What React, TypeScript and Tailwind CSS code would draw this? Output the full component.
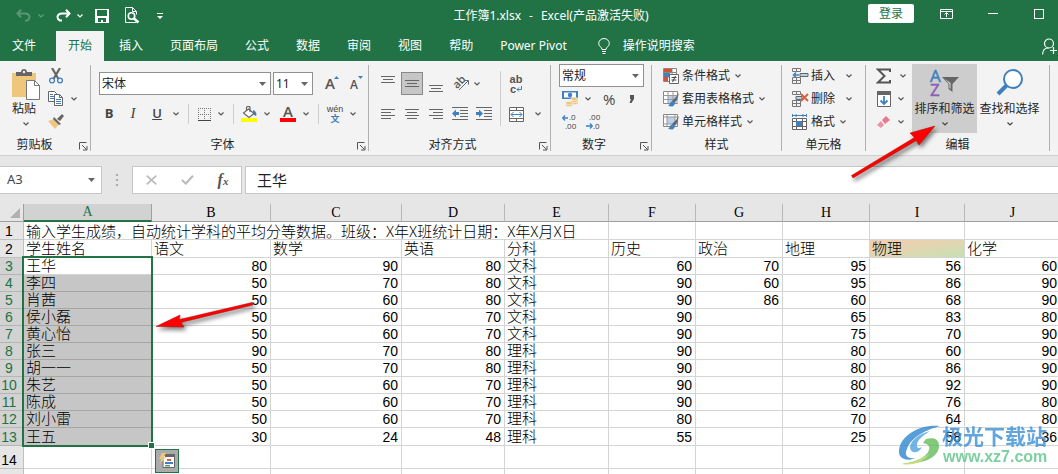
import type { ReactNode } from 'react';
import clsx from 'clsx';

type Row = {
  name: string;
  scores: (string | number)[];
};

const columns = [
  { id: 'A', width: 'w-[128px]' },
  { id: 'B', width: 'w-[119px]' },
  { id: 'C', width: 'w-[131px]' },
  { id: 'D', width: 'w-[103px]' },
  { id: 'E', width: 'w-[104px]' },
  { id: 'F', width: 'w-[87px]' },
  { id: 'G', width: 'w-[87px]' },
  { id: 'H', width: 'w-[87px]' },
  { id: 'I', width: 'w-[95px]' },
  { id: 'J', width: 'w-[96px]' },
];

const subjects = ['学生姓名', '语文', '数学', '英语', '分科', '历史', '政治', '地理', '物理', '化学'];

const rows: Row[] = [
  { name: '王华', scores: [80, 90, 80, '文科', 60, 70, 95, 56, 60] },
  { name: '李四', scores: [50, 70, 80, '文科', 90, 60, 95, 86, 90] },
  { name: '肖茜', scores: [50, 60, 80, '文科', 90, 86, 60, 68, 90] },
  { name: '侯小磊', scores: [50, 60, 70, '文科', 90, '', 65, 83, 80] },
  { name: '黄心怡', scores: [50, 60, 70, '文科', 90, '', 75, 70, 90] },
  { name: '张三', scores: [90, 70, 80, '理科', 90, '', 80, 60, 90] },
  { name: '胡一一', scores: [50, 70, 80, '理科', 90, '', 80, 86, 90] },
  { name: '朱艺', scores: [50, 60, 70, '理科', 90, '', 80, 92, 90] },
  { name: '陈成', scores: [50, 60, 70, '理科', 90, '', 62, 76, 80] },
  { name: '刘小雷', scores: [50, 60, 70, '理科', 80, '', 70, 64, 80] },
  { name: '王五', scores: [30, 24, 48, '理科', 55, '', 25, 58, 36] },
];

const tabs = ['开始', '插入', '页面布局', '公式', '数据', '审阅', '视图', '帮助', 'Power Pivot'];

/* ---------- small shared pieces ---------- */

function Chevron({ className = 'text-[#555]' }: { className?: string }) {
  return (
    <svg className={clsx('shrink-0', className)} width="6" height="4" viewBox="0 0 6 4" fill="none" stroke="currentColor" strokeWidth="1.2">
      <path d="M0.5 0.5 3 3 5.5 0.5" />
    </svg>
  );
}

function Triangle() {
  return (
    <svg className="pointer-events-none shrink-0" width="7" height="4" viewBox="0 0 7 4">
      <path d="M0 0h7L3.5 4z" fill="#666" />
    </svg>
  );
}

function IconButton({ label, className, children }: { label: string; className?: string; children: ReactNode }) {
  return (
    <button type="button" aria-label={label} className={clsx('flex shrink-0 items-center justify-center', className ?? 'h-6 w-6')}>
      {children}
    </button>
  );
}

function Separator() {
  return <div className="mx-[5px] h-5 w-px shrink-0 bg-[#cfcfcf]" />;
}

function Picker({ label, value, className }: { label: string; value: string; className: string }) {
  return (
    <div className={clsx('flex h-[23px] items-center border border-[#919191] bg-white pr-1', className)}>
      <select aria-label={label} className="min-w-0 flex-1 appearance-none bg-transparent pl-0.5 text-xs text-[#222] outline-none">
        <option>{value}</option>
      </select>
      <Triangle />
    </div>
  );
}

type GroupProps = { title: string; width: string; launcher?: boolean; titleClass?: string; children: ReactNode };

function Group({ title, width, launcher, titleClass, children }: GroupProps) {
  return (
    <>
      <section aria-label={title} className={clsx('flex shrink-0 flex-col', width)}>
        <div className="flex-1">{children}</div>
        <div className="flex h-5 items-center">
          <span className={clsx('flex-1 text-center', titleClass)}>{title}</span>
          {launcher && (
            <button type="button" aria-label={`${title}设置`} className="w-[14px] pt-0.5 pl-[3px]">
              <svg width="9" height="9" viewBox="0 0 9 9" fill="none" stroke="#555">
                <path d="M0.5 7.5v-7h7M3 3l4.5 4.5M8 4v4H4" />
              </svg>
            </button>
          )}
        </div>
      </section>
      <div className="my-1 w-px shrink-0 bg-[#b1b1b1]" />
    </>
  );
}

function Lines({ d }: { d: string }) {
  return (
    <svg width="14" height="16" viewBox="0 0 14 16" stroke="#666" shapeRendering="crispEdges">
      <path d={d} />
    </svg>
  );
}

/* ---------- ribbon icons ---------- */

function PasteIcon() {
  return (
    <svg width="28" height="31" viewBox="0 0 28 31">
      <path d="M0 4h24v24H0z" fill="#eec77c" />
      <path d="M4 7V3h5c0-4 6-4 6 0h5v4z" fill="#666" />
      <circle cx="12" cy="3" r="1.2" fill="#f3f3f3" />
      <path d="M14.5 11.5h8l5 5v14h-13z" fill="#fff" stroke="#777" />
      <path d="M22.5 11.5v5h5" fill="none" stroke="#777" />
    </svg>
  );
}

function CutIcon() {
  return (
    <svg width="14" height="16" viewBox="0 0 14 16" fill="none">
      <path d="M3 0 9.5 11M11 0 4.5 11" stroke="#666" strokeWidth="2.2" />
      <circle cx="3" cy="12.5" r="2.4" stroke="#4080bf" strokeWidth="1.3" />
      <circle cx="11" cy="12.5" r="2.4" stroke="#4080bf" strokeWidth="1.3" />
    </svg>
  );
}

function CopyIcon() {
  return (
    <svg width="16" height="15" viewBox="0 0 16 15">
      <path d="M0.5 0.5h6l2 2v8h-8z" fill="#fff" stroke="#666" />
      <path d="M2 3.5h3M2 5.5h4M2 7.5h4" stroke="#4080bf" />
      <path d="M6.5 3.5h5l3 3v8h-8z" fill="#fff" stroke="#666" />
      <path d="M11.5 3.5v3h3" fill="none" stroke="#666" />
      <path d="M8 8.5h5M8 10.5h5M8 12.5h5" stroke="#4080bf" />
    </svg>
  );
}

function BrushIcon() {
  return (
    <svg width="16" height="15" viewBox="0 0 16 15">
      <path d="M0 7 6 5l5 5-4 5z" fill="#eec77c" />
      <path d="m6 3 7 7-2 1-6-6z" fill="#666" />
      <path d="m9 5 5-5 2 2-4 5z" fill="#666" />
    </svg>
  );
}

function FillColorIcon() {
  return (
    <svg width="16" height="16" viewBox="0 0 16 16">
      <path d="M12 4c3 1 4 3 3 6l-2-1-1-3z" fill="#4080bf" />
      <path d="M7.5 3 13 7.5 8 11.5 2.5 7z" fill="#fff" stroke="#666" strokeWidth="1.2" />
      <path d="M5.5 5V1.5C5.5 0 9 0 9 1.5V6" fill="none" stroke="#666" strokeWidth="1.2" />
      <path d="M0 12h16v4H0z" fill="#ff0" />
    </svg>
  );
}

function BordersIcon() {
  return (
    <svg width="13" height="13" viewBox="0 0 13 13" stroke="#777" shapeRendering="crispEdges">
      <path d="M0 .5h13M0 6.5h13M.5 0v13M6.5 0v13M12.5 0v13" strokeDasharray="1 1" />
      <path d="M0 12.5h13" stroke="#444" />
    </svg>
  );
}

function IndentIcon({ out }: { out?: boolean }) {
  return (
    <svg width="16" height="14" viewBox="0 0 16 14">
      <path d="M0 .5h16M8 3.5h8M8 6.5h8M8 9.5h8M0 12.5h16" stroke="#666" shapeRendering="crispEdges" />
      <path d={out ? 'M0 6.5 4 2.5V5h3v3H4v2.5z' : 'M7 6.5 3 2.5V5H0v3h3v2.5z'} fill="#4080bf" />
    </svg>
  );
}

function MergeIcon() {
  return (
    <svg width="15" height="15" viewBox="0 0 15 15" fill="none" stroke="#666">
      <path d="M.5.5h14v14H.5zM.5 3.5h14M.5 11.5h14M7.5 0v3.5M7.5 11.5V15" fill="#fff" />
      <path d="M2 7.5h11M4.5 5 2 7.5 4.5 10M10.5 5 13 7.5 10.5 10" stroke="#4080bf" />
    </svg>
  );
}

function OrientationIcon() {
  return (
    <svg className="overflow-visible" width="17" height="17" viewBox="0 0 17 17">
      <text x="0" y="11" fontSize="11" fontWeight="600" fill="#555" transform="rotate(-45 6 8)" fontFamily="Open Sans, sans-serif">ab</text>
      <path d="M6 15 15 6M11.5 5.5h4v4" fill="none" stroke="#666" />
    </svg>
  );
}

function CurrencyIcon() {
  return (
    <svg width="16" height="16" viewBox="0 0 16 16">
      <path d="M0 0h16v8H0z" fill="#4080bf" />
      <path d="M2 1.5h12v5H2z" fill="#fff" />
      <circle cx="8" cy="4" r="2.2" fill="#4080bf" />
      <g fill="#eec77c" stroke="#f3f3f3" strokeWidth=".6">
        <ellipse cx="12.5" cy="12" rx="3.5" ry="1.7" />
        <ellipse cx="12.5" cy="10" rx="3.5" ry="1.7" />
        <ellipse cx="12.5" cy="8" rx="3.5" ry="1.7" />
        <ellipse cx="7" cy="14" rx="3.5" ry="1.7" />
        <ellipse cx="7" cy="12" rx="3.5" ry="1.7" />
      </g>
    </svg>
  );
}

function DecimalIcon({ grow }: { grow?: boolean }) {
  return (
    <svg className="overflow-visible" width="15" height="14" viewBox="0 0 15 14" fontFamily="Open Sans, sans-serif" fontSize="8" fill="#444">
      <text x={grow ? 7 : 3} y="5">{grow ? '.0' : '.00'}</text>
      <text x={grow ? 3 : 7} y="14">{grow ? '.00' : '.0'}</text>
      <path d={grow ? 'M6 3H1M3 .5.7 3 3 5.5' : 'M0 11h6M4 8.5 6.3 11 4 13.5'} fill="none" stroke="#4080bf" strokeWidth="1.3" />
    </svg>
  );
}

function ConditionalIcon() {
  return (
    <svg width="16" height="16" viewBox="0 0 16 16">
      <path d="M.5.5h13v13H.5zM.5 4.5h13M.5 9h13M4.5.5v13M9 .5v13" fill="#fff" stroke="#888" />
      <path d="M1 1h8v3H1zM1 9h4v4H1z" fill="#d8502e" />
      <path d="M1 5h6v4H1z" fill="#4080bf" />
      <path d="M6.5 6.5h9v9h-9z" fill="#fff" stroke="#666" />
      <path d="M8.5 9.5h5M8.5 12h5M12.5 8l-3 6" stroke="#444" />
    </svg>
  );
}

function TableStyleIcon({ cell }: { cell?: boolean }) {
  return (
    <svg width="16" height="16" viewBox="0 0 16 16">
      <path d="M.5.5h14v12H.5z" fill="#fff" stroke="#888" />
      <path d={cell ? 'M4 3h8v7H4z' : 'M5 4h10v8H5z'} fill="#b9d0e8" />
      <path d={cell ? 'M.5 3h14M.5 10h14M4 .5v12M12 .5v12' : 'M.5 4.5h14M.5 8.5h14M5 .5v12M10 .5v12'} stroke="#999" fill="none" />
      <path d="m16 2-2 7-3 3-2-2 4-4z" fill="#666" />
      <path d="M5 15c2-1 2-5 5-5 3 1 2 5-1 5.5z" fill="#4080bf" />
    </svg>
  );
}

function CellsIcon({ kind }: { kind: 'insert' | 'delete' | 'format' }) {
  if (kind === 'format') {
    return (
      <svg width="16" height="16" viewBox="0 0 16 16" fill="none">
        <path d="M.5 0v3M14.5 0v3M1 1.5h13M4 0v3M11 0v3" stroke="#4080bf" />
        <path d="M.5 4.5h14v11H.5zM.5 7.5h14M.5 12.5h14M4.5 4.5v11M10.5 4.5v11" stroke="#666" fill="#fff" />
        <path d="M4 7h6v5H4z" fill="#4080bf" />
      </svg>
    );
  }
  return (
    <svg width="17" height="16" viewBox="0 0 17 16" fill="none">
      <path d="M.5.5h8v3h-8zM4.5.5v3M.5 9.5h8v6h-8zM4.5 9.5v6M.5 12.5h8" stroke="#777" />
      {kind === 'insert' ? (
        <>
          <path d="M8 5.5h8v3H8z" fill="#b9d0e8" stroke="#666" />
          <path d="M7 7H2M4 4.5 1.5 7 4 9.5" stroke="#4080bf" strokeWidth="1.6" />
        </>
      ) : (
        <>
          <path d="M4 5.5h6v3H4z" fill="#b9d0e8" stroke="#666" />
          <path d="m9 3 7 7M16 3l-7 7" stroke="#e0593a" strokeWidth="1.8" />
        </>
      )}
    </svg>
  );
}

/* ---------- title bar + tabs ---------- */

function TitleBar() {
  return (
    <div className="flex h-[31px] items-center">
      <div className="flex w-[200px] items-center pl-4">
        <IconButton label="撤消" className="h-5 w-[15px] opacity-25">
          <svg width="15" height="13" viewBox="0 0 15 13" fill="none" stroke="#fff" strokeWidth="2">
            <path d="M5 0.7 1.5 4.5 5 8.3M2 4.5h7c5 0 6 5 2 7H9" />
          </svg>
        </IconButton>
        <Chevron className="ml-[7px] text-white opacity-30" />
        <IconButton label="恢复" className="ml-3 h-5 w-[15px]">
          <svg width="15" height="13" viewBox="0 0 15 13" fill="none" stroke="#fff" strokeWidth="2">
            <path d="m10 .7 3.5 3.8L10 8.3M13 4.5H6c-5 0-6 5-2 7h2" />
          </svg>
        </IconButton>
        <Chevron className="ml-[6px] text-white" />
        <IconButton label="保存" className="ml-3 h-5 w-[14px]">
          <svg width="14" height="14" viewBox="0 0 14 14">
            <path d="M0 0h14v14H0z" fill="#fff" />
            <path d="M2 1h10v6H2zM3 9h8v4H8v-2H6v2H3z" fill="#217346" />
          </svg>
        </IconButton>
        <IconButton label="打印预览" className="ml-4 h-5 w-[15px]">
          <svg width="15" height="17" viewBox="0 0 15 17" fill="none" stroke="#fff">
            <path d="M11.5 15.5H.5V.5h7l4 4v3M7.5.5v4h4" />
            <circle cx="6.5" cy="9" r="3.2" strokeWidth="1.6" />
            <path d="m9 11.5 4.5 4" strokeWidth="2.4" />
          </svg>
        </IconButton>
        <IconButton label="自定义快速访问工具栏" className="ml-[17px] h-5 w-[6px]">
          <svg width="6" height="6" viewBox="0 0 6 6">
            <path d="M0 0h6v1H0zM0 3h6L3 6z" fill="#fff" />
          </svg>
        </IconButton>
      </div>
      <h1 className="flex flex-1 justify-center gap-2 pl-[34px] whitespace-nowrap text-white">
        <span>工作簿1.xlsx</span>
        <span>-</span>
        <span>Excel(产品激活失败)</span>
      </h1>
      <div className="flex w-[190px] items-center pr-[14px] pb-1">
        <button type="button" className="h-[19px] w-[46px] rounded-xs bg-white leading-[19px] text-[#217346]">登录</button>
        <IconButton label="功能区显示选项" className="ml-[26px] h-4 w-[13px]">
          <svg width="13" height="10" viewBox="0 0 13 10" fill="none" stroke="#fff">
            <path d="M.5.5h12v9H.5zM.5 2.5h12M6.5 8V4M4.5 5.5l2-2 2 2" />
          </svg>
        </IconButton>
        <IconButton label="最小化" className="ml-[35px] h-4 w-[10px]">
          <span className="h-px w-[10px] bg-white" />
        </IconButton>
        <IconButton label="最大化" className="ml-9 h-4 w-[10px]">
          <span className="h-[10px] w-[10px] border border-white" />
        </IconButton>
      </div>
    </div>
  );
}

function Tabs() {
  return (
    <nav className="flex h-[30px] items-stretch gap-[3px] text-white">
      <button type="button" className="mr-[5px] px-3">文件</button>
      {tabs.map((tab) => (
        <button
          key={tab}
          type="button"
          className={clsx('shrink-0 px-3', tab === '开始' && 'bg-[#f3f3f3] text-[#217346]')}
        >
          {tab}
        </button>
      ))}
      <button type="button" className="flex shrink-0 items-center gap-[13px] pl-4">
        <svg width="12" height="17" viewBox="0 0 12 17" fill="none" stroke="#fff">
          <path d="M4 11.5C4 9 .7 8.5.7 5.5a5.3 5 0 0 1 10.6 0C11.3 8.5 8 9 8 11.5zM4 13.5h4M4.5 15.5h3" />
        </svg>
        操作说明搜索
      </button>
      <button type="button" aria-label="共享" className="ml-auto pr-px">
        <svg width="15" height="17" viewBox="0 0 15 17" fill="none" stroke="#fff" strokeWidth="1.2">
          <circle cx="7" cy="5.5" r="4.5" />
          <path d="M.6 16.5c0-4 2-6.5 6-6.5M8 12.5h7M11.5 9v7" />
        </svg>
      </button>
    </nav>
  );
}

/* ---------- ribbon ---------- */

function MenuRow({ icon, text, wide }: { icon: ReactNode; text: string; wide?: boolean }) {
  return (
    <button type="button" className="flex h-[23px] items-center whitespace-nowrap">
      <span className="w-[19px]">{icon}</span>
      {text}
      <span className={wide ? 'w-[11px]' : 'w-[5px]'} />
      <Chevron />
    </button>
  );
}

function Ribbon() {
  return (
    <div className="flex h-[95px] overflow-hidden border-b border-[#d0d0d0] bg-[#f3f3f3] text-[#262626]">
      <Group title="剪贴板" width="w-[90px]" launcher titleClass="pr-[7px]">
        <div className="flex">
          <button type="button" className="flex w-12 flex-col items-center pt-2">
            <span className="pl-1"><PasteIcon /></span>
            <span className="leading-[18px]">粘贴</span>
            <span className="pt-1 pl-1"><Chevron className="block text-[#555]" /></span>
          </button>
          <div className="flex flex-col pt-[3px]">
            <IconButton label="剪切" className="h-[23px] w-4"><CutIcon /></IconButton>
            <div className="flex items-center gap-[7px]">
              <IconButton label="复制" className="h-[23px] w-4"><CopyIcon /></IconButton>
              <Chevron />
            </div>
            <IconButton label="格式刷" className="h-[23px] w-4"><BrushIcon /></IconButton>
          </div>
        </div>
      </Group>

      <Group title="字体" width="w-[277px]" launcher>
        <div className="flex flex-col gap-[7px] pt-[11px] pl-2">
          <div className="flex h-[23px] items-center">
            <Picker label="字体" value="宋体" className="w-[172px]" />
            <Picker label="字号" value="11" className="ml-[2px] w-[40px]" />
            <IconButton label="增大字号" className="ml-[7px] h-6 w-6">
              <svg className="overflow-visible" width="14" height="16" viewBox="0 0 14 16">
                <text x="0" y="13" fontSize="15" fontWeight="600" fill="#555" fontFamily="Open Sans, sans-serif">A</text>
                <path d="M9 3h5L11.5 0z" fill="#4080bf" />
              </svg>
            </IconButton>
            <IconButton label="减小字号">
              <svg className="overflow-visible" width="13" height="16" viewBox="0 0 13 16">
                <text x="0" y="13" fontSize="12" fontWeight="600" fill="#555" fontFamily="Open Sans, sans-serif">A</text>
                <path d="M8 0h5l-2.500 3z" fill="#4080bf" />
              </svg>
            </IconButton>
          </div>
          <div className="flex h-6 items-center font-['Open_Sans'] text-[13px] text-[#444]">
            <button type="button" className="w-5 font-bold">B</button>
            <button type="button" className="ml-1 w-5 font-['Liberation_Serif'] text-[15px] italic">I</button>
            <button type="button" className="ml-1 w-5 font-semibold underline">U</button>
            <span className="ml-[6px]"><Chevron /></span>
            <span className="ml-[4px]"><Separator /></span>
            <IconButton label="边框" className="ml-[2px] h-6 w-4"><BordersIcon /></IconButton>
            <span className="ml-[6px]"><Chevron /></span>
            <span className="ml-1"><Separator /></span>
            <IconButton label="填充颜色" className="ml-[2px] h-6 w-4"><FillColorIcon /></IconButton>
            <span className="ml-[7px]"><Chevron /></span>
            <IconButton label="字体颜色" className="ml-[10px] h-6 w-4">
              <svg className="overflow-visible" width="16" height="16" viewBox="0 0 16 16">
                <text x="3" y="11" fontSize="15" fontWeight="600" fill="#555" fontFamily="Open Sans, sans-serif">A</text>
                <path d="M0 12h16v4H0z" fill="#f00" />
              </svg>
            </IconButton>
            <span className="ml-[7px]"><Chevron /></span>
            <span className="ml-[4px]"><Separator /></span>
            <button type="button" className="ml-[2px] flex w-[18px] flex-col items-center font-['Liberation_Sans','Noto_Sans_CJK_SC'] text-[9px] leading-[10px]">
              <span>wén</span>
              <span className="font-bold text-[#4080bf]">文</span>
            </button>
            <span className="ml-[6px]"><Chevron /></span>
          </div>
        </div>
      </Group>

      <Group title="对齐方式" width="w-[181px]" launcher>
        <div className="flex pl-[7px]">
          <div className="flex flex-col gap-[7px] pt-[11px]">
            <div className="flex h-[23px] items-center">
              <IconButton label="顶端对齐"><Lines d="M0 .5h14M2 3.5h10M0 6.5h14" /></IconButton>
              <IconButton label="垂直居中" className="mx-px h-[23px] w-[22px] border border-[#888] bg-[#c6c6c6]">
                <Lines d="M0 4.5h14M2 7.5h10M0 10.5h14" />
              </IconButton>
              <IconButton label="底端对齐"><Lines d="M0 9.5h14M2 12.5h10M0 15.5h14" /></IconButton>
              <IconButton label="方向" className="h-6 w-[26px]"><OrientationIcon /></IconButton>
              <Chevron />
            </div>
            <div className="flex h-6 items-center">
              <IconButton label="左对齐"><Lines d="M0 3.5h14M0 6.5h10M0 9.5h14M0 12.5h10" /></IconButton>
              <IconButton label="居中"><Lines d="M0 3.5h14M2 6.5h10M0 9.5h14M2 12.5h10" /></IconButton>
              <IconButton label="右对齐"><Lines d="M0 3.5h14M4 6.5h10M0 9.5h14M4 12.5h10" /></IconButton>
              <IconButton label="减少缩进量"><IndentIcon out /></IconButton>
              <IconButton label="增加缩进量"><IndentIcon /></IconButton>
            </div>
          </div>
          <div className="mt-[10px] ml-1 h-[55px] w-px bg-[#cfcfcf]" />
          <div className="flex flex-col gap-[7px] pt-[11px] pl-[3px]">
            <button type="button" className="flex h-[23px] w-6 flex-col items-center justify-center font-['Liberation_Sans'] text-[11px] leading-[10px] font-bold text-[#555]">
              <span>ab</span>
              <span className="flex items-center">
                c
                <svg width="6" height="6" viewBox="0 0 6 6" fill="none" stroke="#4080bf">
                  <path d="M5.5 0v3.5H1M3 1.5l-2 2 2 2" />
                </svg>
              </span>
            </button>
            <div className="flex items-center gap-[7px]">
              <IconButton label="合并后居中"><MergeIcon /></IconButton>
              <Chevron />
            </div>
          </div>
        </div>
      </Group>

      <Group title="数字" width="w-[100px]" launcher>
        <div className="flex flex-col pt-[3px] pl-2">
          <Picker label="数字格式" value="常规" className="w-[85px]" />
          <div className="flex h-[23px] items-center pl-[3px]">
            <IconButton label="会计数字格式" className="h-5 w-4"><CurrencyIcon /></IconButton>
            <span className="ml-[7px]"><Chevron /></span>
            <button type="button" className="ml-3 font-['Open_Sans'] text-[15px] text-[#444]">%</button>
            <button type="button" aria-label="千位分隔样式" className="ml-[14px]">
              <svg width="6" height="8" viewBox="0 0 6 8">
                <path d="M1 0h4v4L2.5 8H.5L2 4H1z" fill="#555" />
              </svg>
            </button>
          </div>
          <div className="flex h-[23px] items-center gap-[9px] pl-[3px]">
            <IconButton label="增加小数位数" className="h-5 w-[15px]"><DecimalIcon grow /></IconButton>
            <IconButton label="减少小数位数" className="h-5 w-[15px]"><DecimalIcon /></IconButton>
          </div>
        </div>
      </Group>

      <Group title="样式" width="w-[129px]">
        <div className="flex flex-col items-start pt-[3px] pl-[11px]">
          <MenuRow icon={<ConditionalIcon />} text="条件格式" />
          <MenuRow icon={<TableStyleIcon />} text="套用表格格式" />
          <MenuRow icon={<TableStyleIcon cell />} text="单元格样式" />
        </div>
      </Group>

      <Group title="单元格" width="w-[83px]">
        <div className="flex flex-col items-start pt-[3px] pl-[10px]">
          <MenuRow icon={<CellsIcon kind="insert" />} text="插入" wide />
          <MenuRow icon={<CellsIcon kind="delete" />} text="删除" wide />
          <MenuRow icon={<CellsIcon kind="format" />} text="格式" />
        </div>
      </Group>

      <Group title="编辑" width="w-[183px]">
        <div className="flex pt-[3px]">
          <div className="flex w-[46px] flex-col pl-[10px]">
            <button type="button" aria-label="自动求和" className="flex h-[23px] items-center gap-[8px]">
              <svg width="16" height="16" viewBox="0 0 16 16" fill="none" stroke="#555" strokeWidth="2">
                <path d="M14 4V1.5H2L8.5 8 2 14.5h12V12" />
              </svg>
              <Chevron />
            </button>
            <button type="button" aria-label="填充" className="flex h-[23px] items-center gap-[7px] pl-px">
              <svg width="14" height="16" viewBox="0 0 14 16" fill="none">
                <path d="M.5.5h13v15H.5z" fill="#fff" stroke="#666" />
                <path d="M0 0h14v4H0z" fill="#666" />
                <path d="M7 5v8M3.5 9.5 7 13l3.5-3.5" stroke="#4080bf" strokeWidth="1.8" />
              </svg>
              <Chevron />
            </button>
            <button type="button" aria-label="清除" className="flex h-[23px] items-center gap-[7px] pl-px">
              <svg width="14" height="14" viewBox="0 0 14 14">
                <path d="m9 1 4 4-5 4-3-4z" fill="#e8798c" />
                <path d="m4 6 3 4-3 3-4-3z" fill="#ec93a2" />
              </svg>
              <Chevron />
            </button>
          </div>
          <button type="button" className="flex h-[69px] w-[65px] flex-col items-center bg-[#cdcdcd] pt-1">
            <svg className="overflow-visible" width="32" height="32" viewBox="0 0 32 32" fontFamily="Open Sans, sans-serif" fontSize="17">
              <text x="1" y="14" fill="#4080bf" stroke="#4080bf" strokeWidth=".5">A</text>
              <text x="1" y="28" fill="#8a5fb5" stroke="#8a5fb5" strokeWidth=".5">Z</text>
              <path d="M13 9h17l-6.500 7v8L19.500 21v-5z" fill="#666" />
              <path d="m16 11 4.500 5v4l1 1v-6z" fill="#ddd" />
            </svg>
            <span className="leading-[18px]">排序和筛选</span>
            <span className="pt-1"><Chevron className="block text-[#444]" /></span>
          </button>
          <button type="button" className="flex w-[65px] flex-col items-center pt-1">
            <svg width="28" height="32" viewBox="0 0 28 32" fill="none" stroke="#4080bf">
              <circle cx="17" cy="11" r="9" fill="#fff" strokeWidth="2" />
              <path d="m11 17-9 9" strokeWidth="4" />
            </svg>
            <span className="leading-[18px]">查找和选择</span>
            <span className="pt-1"><Chevron className="block text-[#444]" /></span>
          </button>
        </div>
      </Group>
    </div>
  );
}

function FormulaBar() {
  return (
    <div className="flex h-12 items-center bg-[#e6e6e6]">
      <div className="flex h-7 w-[102px] items-center border border-l-0 border-[#c6c6c6] bg-white pr-[6px]">
        <input aria-label="名称框" defaultValue="A3" className="min-w-0 flex-1 pl-[7px] text-[13px] text-[#444] outline-none" />
        <Triangle />
      </div>
      <div className="flex w-[30px] flex-col items-center gap-[3px]">
        <span className="h-[2px] w-[2px] bg-[#aaa]" />
        <span className="h-[2px] w-[2px] bg-[#aaa]" />
        <span className="h-[2px] w-[2px] bg-[#aaa]" />
      </div>
      <div className="flex h-7 w-[110px] items-center border border-[#c6c6c6] bg-white">
        <IconButton label="取消" className="h-6 w-9">
          <svg width="11" height="10" viewBox="0 0 11 10" stroke="#bbb" strokeWidth="1.8">
            <path d="m.7.7 9.6 8.6M10.3.7.7 9.3" />
          </svg>
        </IconButton>
        <IconButton label="输入" className="h-6 w-9">
          <svg width="13" height="10" viewBox="0 0 13 10" fill="none" stroke="#bbb" strokeWidth="2.2">
            <path d="m.8 5 4 3.5L12 .8" />
          </svg>
        </IconButton>
        <button type="button" className="w-9 font-['Liberation_Serif'] text-base leading-6 font-bold text-[#555] italic">
          f<span className="text-[11px]">x</span>
        </button>
      </div>
      <input
        aria-label="编辑栏"
        defaultValue="王华"
        className="ml-[3px] h-7 min-w-0 flex-1 border border-r-0 border-[#c6c6c6] bg-white pb-0.5 pl-[11px] text-[15px] text-[#222] outline-none"
      />
    </div>
  );
}

/* ---------- worksheet ---------- */

const cell = 'border-r border-b border-[#d4d4d4] p-0 leading-4 whitespace-nowrap';

function RowHeader({ n, selected }: { n: number; selected?: boolean }) {
  return (
    <th
      scope="row"
      className={clsx(
        'border-r border-b p-0 pr-[5px] text-center align-bottom text-sm leading-4 font-normal',
        selected ? 'border-[#b5b5b5] bg-[#d2d2d2] text-[#217346]' : 'border-[#c0c0c0] bg-[#e6e6e6] text-black',
      )}
    >
      {n}
    </th>
  );
}

function Sheet() {
  return (
    <div className="relative overflow-hidden bg-white">
      <table className="w-[1061px] table-fixed border-separate border-spacing-0 font-['Liberation_Sans','Noto_Sans_CJK_SC',sans-serif] text-[15px] font-light text-black">
        <colgroup>
          <col className="w-6" />
          {columns.map((col) => (
            <col key={col.id} className={col.width} />
          ))}
        </colgroup>
        <thead>
          <tr className="h-[18px] bg-[#e6e6e6]">
            <th className="border-r border-b border-[#9f9f9f] p-0" aria-label="全选">
              <svg className="mr-[3px] ml-auto" width="10" height="10" viewBox="0 0 10 10">
                <path d="M10 0v10H0z" fill="#b1b1b1" />
              </svg>
            </th>
            {columns.map(({ id }) => (
              <th
                key={id}
                scope="col"
                className={clsx(
                  "border-r p-0 text-center font-['Liberation_Serif'] text-sm leading-4 font-normal",
                  id === 'A'
                    ? 'border-b-2 border-r-[#9f9f9f] border-b-[#217346] bg-[#d2d2d2] text-[#217346]'
                    : 'border-b border-r-[#b8b8b8] border-b-[#9f9f9f]',
                )}
              >
                {id}
              </th>
            ))}
          </tr>
        </thead>
        <tbody>
          <tr className="h-[18px]">
            <RowHeader n={1} />
            <td colSpan={5} className={clsx(cell, "pl-0.5 font-['Noto_Sans_CJK_SC']")}>
              输入学生成绩，自动统计学科的平均分等数据。班级：X年X班统计日期：X年X月X日
            </td>
            {columns.slice(5).map(({ id }) => (
              <td key={id} className={cell} />
            ))}
          </tr>
          <tr className="h-[18px]">
            <RowHeader n={2} />
            {subjects.map((subject) => (
              <td
                key={subject}
                className={clsx(cell, 'pl-0.5', subject === '物理' && 'bg-linear-to-br from-[#f8cbad] to-[#c6e0b4]')}
              >
                {subject}
              </td>
            ))}
          </tr>
          {rows.map((row, i) => (
            <tr key={row.name} className={i === rows.length - 1 ? 'h-[18px]' : 'h-[17px]'}>
              <RowHeader n={i + 3} selected />
              <td className={clsx(cell, 'pl-0.5', i > 0 && 'border-b-[#a6a6a6] bg-[#c6c6c6]')}>{row.name}</td>
              {row.scores.map((score, j) => (
                <td key={j} className={clsx(cell, typeof score === 'number' ? 'pr-[3px] text-right align-bottom text-sm leading-4' : 'pl-0.5')}>
                  {score}
                </td>
              ))}
            </tr>
          ))}
          {[14, 15].map((n) => (
            <tr key={n} className="h-[23px]">
              <RowHeader n={n} />
              {columns.map(({ id }) => (
                <td key={id} className={cell} />
              ))}
            </tr>
          ))}
        </tbody>
      </table>

      {/* selection frame around A3:A13 */}
      <div className="pointer-events-none absolute top-[52px] left-[22px] h-[191px] w-[131px] border-2 border-[#217346]" />
      <div className="absolute top-[238px] left-[148px] h-[7px] w-[7px] border border-white bg-[#217346]" />

      <button
        type="button"
        aria-label="快速分析"
        className="absolute top-[245px] left-[155px] flex h-6 w-6 items-center justify-center border border-[#217346] bg-[#ababab]"
      >
        <svg width="17" height="16" viewBox="0 0 17 16">
          <path d="M4 2.5h11.5v12H4z" fill="#fff" stroke="#666" />
          <path d="M6 1h10v3H6z" fill="#666" />
          <path d="M8 6h4v2H8z" fill="#e0593a" />
          <path d="M6 9h8v2H6z" fill="#4080bf" />
          <path d="M6 12h5v1.5H6z" fill="#4aa06a" />
          <path d="M3 0h4L5 4h2L1 11l1.5-5H0z" fill="#eec77c" />
        </svg>
      </button>
    </div>
  );
}

/* ---------- overlays ---------- */

function Pointers() {
  return (
    <svg className="pointer-events-none absolute top-0 left-0" width="1058" height="474" viewBox="0 0 1058 474">
      <g fill="#f00" stroke="#a01010" strokeWidth=".5" className="drop-shadow-[2px_3px_2px_rgba(0,0,0,0.5)]">
        <path d="M935 126 919 145 916.500 140.500 853 178 851.500 175.500 914.500 137.500 910 133z" />
        <path d="M156 326.500 180 315 179.500 319.500 252 302.500 253 305 181 322.500 184 327z" />
      </g>
    </svg>
  );
}

function Watermark() {
  return (
    <div className="pointer-events-none absolute top-[423px] left-[898px] flex opacity-80">
      <svg width="44" height="44" viewBox="0 -2 44 44">
        <path d="M42 1C22-1 3 10 1 25c-1 9 8 12 16 8-8 1-11-3-8-9C13 12 28 5 42 1z" fill="#2f86d0" />
        <path d="M32 6C21 9 13 15 12 22c0 7 9 7 12 0-3 2-6 1-5-3 1-5 7-9 13-13z" fill="#4da3df" />
        <path d="M28 14c8-2 13 0 13 7 0 10-12 18-37 18 14-2 25-7 27-14 1-4-1-6-6-7z" fill="#62bd5b" />
        <path d="M4 39c10 2 22-2 28-11-6 6-16 10-28 11z" fill="#c9d84a" />
      </svg>
      <div>
        <div className="font-['Noto_Sans_CJK_SC'] text-[21px] leading-6 font-bold text-[#3a8fd6]">极光下载站</div>
        <div className="pl-px font-['Liberation_Sans'] text-base leading-5 font-bold text-[#5cc487]">www.xz7.com</div>
      </div>
    </div>
  );
}

export default function App() {
  return (
    <div className="relative h-screen overflow-hidden bg-[#e6e6e6] font-['Noto_Sans','Noto_Sans_CJK_SC',sans-serif] text-xs">
      <header className="bg-[#217346]">
        <TitleBar />
        <Tabs />
      </header>
      <Ribbon />
      <FormulaBar />
      <Sheet />
      <Pointers />
      <Watermark />
    </div>
  );
}
